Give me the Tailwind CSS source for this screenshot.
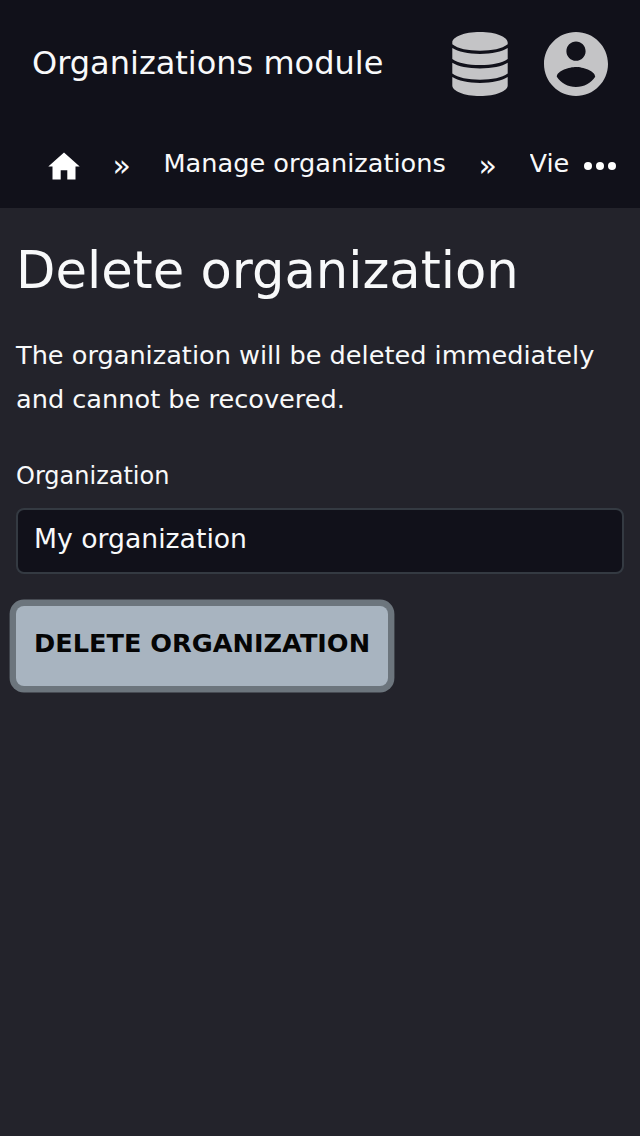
<!DOCTYPE html>
<html lang="en">
<head>
<meta charset="utf-8">
<title>Delete organization</title>
<script src="https://cdn.jsdelivr.net/npm/@tailwindcss/browser@4"></script>
</head>
<body class="min-h-screen bg-[#23232b] text-[#f8f9fa] font-['DejaVu_Sans',sans-serif]">
<header class="h-[208px] bg-[#11111a]">
  <div class="flex h-32 items-center pl-8 pr-8">
    <div class="grow pb-0.5 text-[32px] leading-[48px] whitespace-nowrap">Organizations module</div>
    <svg class="size-16 mr-8 shrink-0" viewBox="0 0 64 64" fill="#c4c4c6"><path d="M4.300 10.500C4.300 5 16 0 32 0s27.700 5 27.700 10.500v1.800C54 16.800 44 18.700 32 18.700S10 16.800 4.300 12.300zM4.300 16C10 19.600 20 21.900 32 21.900S54 19.600 59.700 16V27C54 31 44 33 32 33S10 31 4.300 27zM4.300 30.700C10 34.300 20 36.400 32 36.400S54 34.300 59.700 30.700V41.500C54 45.700 44 47.700 32 47.700S10 45.700 4.300 41.500zM4.300 45C10 48.600 20 50.900 32 50.900S54 48.600 59.700 45V53.500C59.700 59 48 64 32 64S4.300 59 4.300 53.500z"/></svg>
    <svg class="size-16 shrink-0" viewBox="2 2 20 20" fill="#c4c4c6"><path d="M12 2C6.480 2 2 6.480 2 12s4.480 10 10 10 10-4.480 10-10S17.520 2 12 2zm0 3c1.660 0 3 1.340 3 3s-1.340 3-3 3-3-1.340-3-3 1.340-3 3-3zm0 14.200c-2.500 0-4.710-1.280-6-3.220.03-1.990 4-3.080 6-3.080 1.990 0 5.970 1.090 6 3.080-1.290 1.940-3.500 3.220-6 3.220z"/></svg>
  </div>
  <nav class="flex h-20 pl-12 pr-6 pt-4 text-[25.600px] leading-[38px] whitespace-nowrap">
    <svg class="size-8 mt-1.5 shrink-0" viewBox="0 0 32 32" fill="#fff"><path d="M16 2.600L.3 16.600H4.500V29.500H12.700V20.200H19.300V29.500H27.500V16.600H31.700z"/></svg>
    <span class="ml-[32.500px] mt-[3px] w-[18px] text-[30px]">»</span>
    <span class="ml-[33px] w-[282px]">Manage organizations</span>
    <span class="ml-[33px] mt-[3px] w-[18px] text-[30px]">»</span>
    <span class="ml-[33px] w-[41px] overflow-hidden">Vie</span>
    <svg class="size-8 ml-auto mt-1.5 shrink-0" viewBox="0 0 32 32" fill="#fff"><circle cx="4" cy="16" r="4"/><circle cx="16" cy="16" r="4"/><circle cx="28" cy="16" r="4"/></svg>
  </nav>
</header>
<main class="px-4 pt-8">
  <h1 class="text-[51.200px] leading-[60px] whitespace-nowrap">Delete organization</h1>
  <p class="mt-[33px] text-[25.600px] leading-[44px]">The organization will be deleted immediately<br>and cannot be recovered.</p>
  <label class="block mt-[37px] text-[24px] leading-[36px]">Organization</label>
  <div class="mt-[14px] h-[66px] rounded-lg border-2 border-[#343a42] bg-[#11111a] px-4 text-[26.670px] leading-[58px]">My organization</div>
  <button class="mt-8 flex h-20 w-[372px] justify-center rounded-lg bg-[#a8b4c0] text-[25.600px] leading-[74px] font-bold text-[#050505] whitespace-nowrap ring-[6.400px] ring-[#6c757d]">DELETE ORGANIZATION</button>
</main>
</body>
</html>
